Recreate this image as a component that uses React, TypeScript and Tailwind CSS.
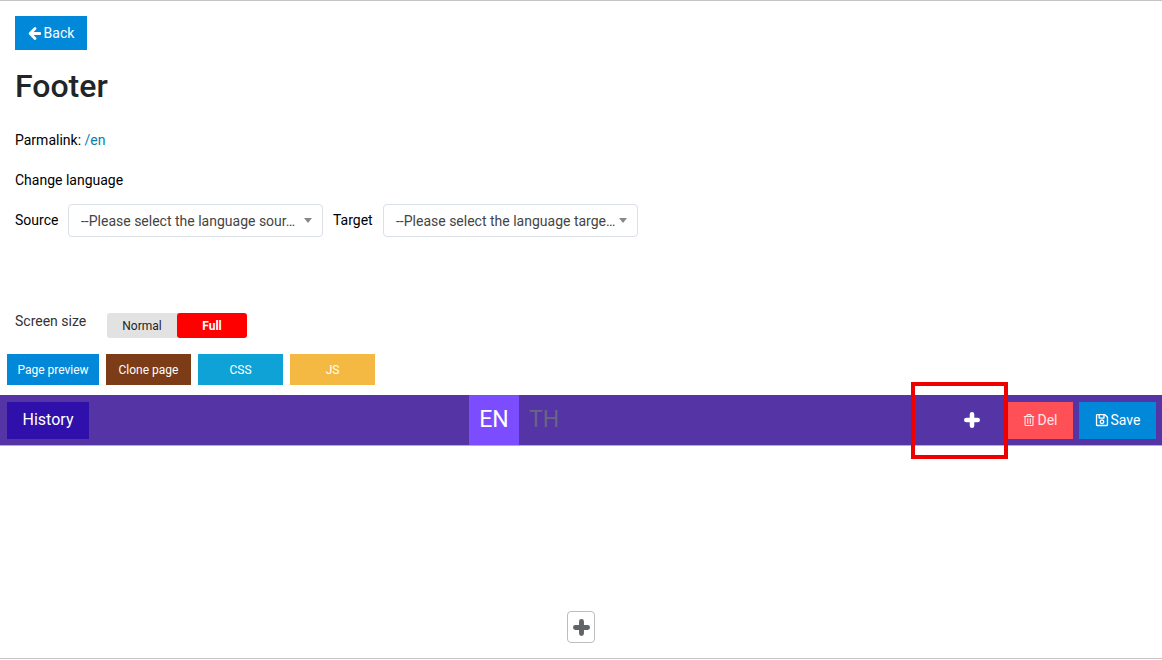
import React from "react";
import { FaRegTrashAlt, FaRegSave } from "react-icons/fa";

function Plus({ className }: { className: string }) {
  return (
    <svg viewBox="0 0 16 16" className={className} fill="none" stroke="currentColor" strokeWidth="4.6" strokeLinecap="round">
      <path d="M8 2.3v11.4M2.3 8h11.4" />
    </svg>
  );
}

function ArrowLeft() {
  return (
    <svg viewBox="0 0 13 13" className="h-[13px] w-[13px]" fill="none" stroke="currentColor" strokeWidth="2.8">
      <path d="M7 1.5 2.2 6.5 7 11.5" strokeLinejoin="round" strokeLinecap="round" />
      <path d="M3 6.5H12" strokeLinecap="round" />
    </svg>
  );
}

function Select({ text }: { text: string }) {
  return (
    <div className="flex h-[33px] w-[255px] items-center rounded-[4px] border border-[#dbdfe6] bg-white pl-[12px] pr-[10px] text-[14px] text-[#444444]">
      <span className="flex-1 whitespace-nowrap pt-[2px]">{text}</span>
      <span className="h-0 w-0 border-x-[4px] border-t-[5px] border-x-transparent border-t-[#888888]" />
    </div>
  );
}

function ActionButton({ label, className }: { label: string; className: string }) {
  return (
    <div className={`flex h-[31px] items-center justify-center text-[12px] text-white ${className}`}>{label}</div>
  );
}

export default function App() {
  return (
    <div className="relative flex h-[659px] w-[1162px] flex-col overflow-hidden border-y border-[#c4c4c4] bg-white font-['Roboto',sans-serif] text-[14px] text-black">
      <div className="flex flex-col px-[15px] pt-[15px]">
        <div className="flex h-[34px] w-[72px] items-center justify-center gap-[3px] bg-[#0288d9] text-[14px] text-white">
          <ArrowLeft />
          <span>Back</span>
        </div>
        <h1 className="mt-[17px] h-[38px] text-[32px] leading-[38px] font-medium text-[#212529]">Footer</h1>
        <div className="mt-[25px] h-[20px] leading-[20px]">
          Parmalink: <span className="text-[#0a7ea8]">/en</span>
        </div>
        <div className="mt-[20px] h-[20px] leading-[20px]">Change language</div>
        <div className="mt-[14px] flex items-center">
          <span className="w-[53px]">Source</span>
          <Select text="--Please select the language sour…" />
          <span className="ml-[10px] w-[50px]">Target</span>
          <Select text="--Please select the language targe…" />
        </div>
        <div className="mt-[76px] flex h-[25px] items-start">
          <span className="mt-[-2px] w-[92px] leading-[20px] text-[#333333]">Screen size</span>
          <div className="flex h-[25px] w-[140px] rounded-[3px] bg-[#e2e2e2] text-[12px]">
            <div className="flex w-[70px] items-center justify-center text-[#222222]">Normal</div>
            <div className="flex w-[70px] items-center justify-center rounded-[3px] bg-[#ff0000] font-bold text-white">Full</div>
          </div>
        </div>
      </div>
      <div className="mt-[16px] flex gap-[7px] px-[7px]">
        <ActionButton label="Page preview" className="w-[92px] bg-[#0288d9]" />
        <ActionButton label="Clone page" className="w-[85px] bg-[#7b3c17]" />
        <ActionButton label="CSS" className="w-[85px] bg-[#0fa2d6]" />
        <ActionButton label="JS" className="w-[85px] bg-[#f4b942]" />
      </div>
      <div className="mt-[10px] flex h-[51px] items-center border-b border-[#b9a6dc] bg-[#5534a5] pl-[7px] pr-[6px]">
        <div className="flex h-[37px] w-[82px] items-center justify-center bg-[#2f10ab] text-[16px] text-white">History</div>
        <div className="ml-[380px] flex h-full">
          <div className="flex w-[50px] items-center justify-center bg-[#7c4dff] text-[23px] text-white">EN</div>
          <div className="flex w-[50px] items-center justify-center text-[23px] text-[#6a6486]">TH</div>
        </div>
        <div className="flex flex-1 justify-end pr-[28px]">
          <Plus className="h-[16px] w-[16px] text-white" />
        </div>
        <div className="flex h-[37px] w-[65px] items-center justify-center gap-[2px] bg-[#ff5058] text-[#ffe3e4]">
          <FaRegTrashAlt className="text-[12px]" />
          <span>Del</span>
        </div>
        <div className="ml-[6px] flex h-[37px] w-[77px] items-center justify-center gap-[2px] bg-[#0288d9] text-white">
          <FaRegSave className="text-[14px]" />
          <span>Save</span>
        </div>
      </div>
      <div className="flex flex-1 items-end justify-center pb-[15px]">
        <div className="flex h-[32px] w-[28px] items-center justify-center rounded-[4px] border border-[#bdbdbd] bg-white">
          <Plus className="h-[17px] w-[17px] text-[#5f6468]" />
        </div>
      </div>
      <div className="absolute left-[911px] top-[381px] h-[77px] w-[97px] border-[4px] border-[#ee0000]" />
    </div>
  );
}
